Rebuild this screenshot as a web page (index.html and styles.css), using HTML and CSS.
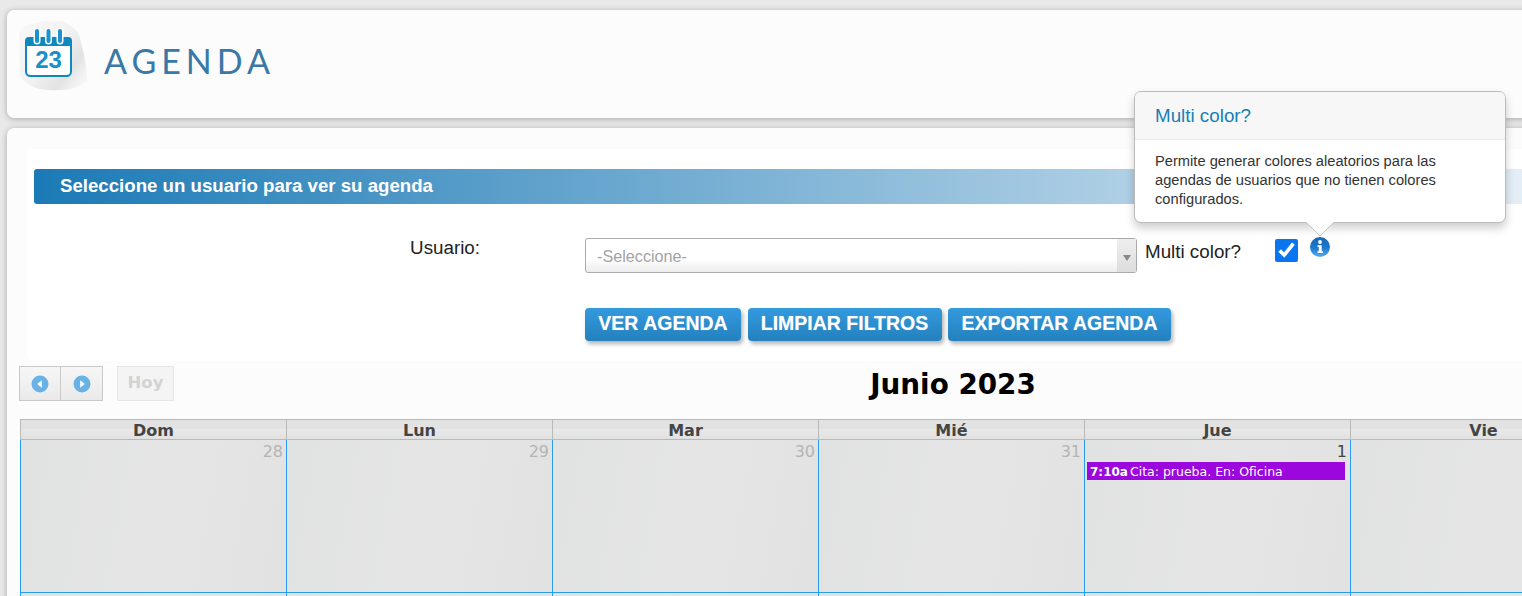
FILE: index.html
```html
<!DOCTYPE html>
<html lang="es">
<head>
<meta charset="utf-8">
<title>Agenda</title>
<link rel="stylesheet" href="styles.css">
</head>
<body>
<div class="page">
  <header class="card head">
    <svg class="logo" width="70" height="74" viewBox="0 0 70 74">
      <defs>
        <linearGradient id="lg" x1="0" y1="0" x2="1" y2=".8"><stop offset="0" stop-color="#f8f8f9"/><stop offset=".55" stop-color="#f1f1f2"/><stop offset=".8" stop-color="#e2e2e3"/><stop offset="1" stop-color="#f6f6f7"/></linearGradient>
      </defs>
      <path d="M0 14Q6 4 18 4Q26 0 34 3Q44 0 50 6Q60 10 62 24Q68 44 68 62Q56 73 30 71Q8 70 1 56Z" fill="url(#lg)"/>
      <rect x="7" y="19" width="45" height="38" rx="4.500" fill="#fff" stroke="#1187c0" stroke-width="2"/>
      <path d="M6 27V22Q6 18 10 18H49Q53 18 53 22V27Z" fill="#1187c0"/>
      <path d="M18 12V22M29.500 12V22M41 12V22" stroke="#fff" stroke-width="7" stroke-linecap="round" fill="none"/>
      <path d="M18 12V22M29.500 12V22M41 12V22" stroke="#1a93cc" stroke-width="4" stroke-linecap="round" fill="none"/>
      <text x="29.500" y="49" text-anchor="middle" class="logo-num">23</text>
    </svg>
    <h1 class="brand">AGENDA</h1>
  </header>

  <main class="card body-card">
    <section class="panel">
      <h2 class="bar">Seleccione un usuario para ver su agenda</h2>
      <div class="form-row">
        <label class="lbl">Usuario:</label>
        <div class="select"><span>-Seleccione-</span><i class="sel-arrow"></i></div>
        <span class="multi">Multi color?</span>
        <input class="chk" type="checkbox" checked>
        <svg class="info" width="20" height="20" viewBox="0 0 20 20">
          <defs><linearGradient id="ig" x1="0" y1="0" x2="0" y2="1"><stop offset="0" stop-color="#1766b6"/><stop offset=".55" stop-color="#1f78cc"/><stop offset="1" stop-color="#52aef0"/></linearGradient></defs>
          <circle cx="10" cy="10" r="10" fill="url(#ig)"/>
          <circle cx="10" cy="5" r="1.900" fill="#fff"/>
          <path d="M7.500 8.200H11.700V14.200H13V16H7.500V14.200H8.800V9.900H7.500Z" fill="#fff"/>
        </svg>
      </div>
      <div class="actions">
        <button class="btn">VER AGENDA</button>
        <button class="btn">LIMPIAR FILTROS</button>
        <button class="btn">EXPORTAR AGENDA</button>
      </div>
    </section>

    <section class="cal">
      <div class="toolbar">
        <div class="nav">
          <span class="nav-btn"><svg width="18" height="18" viewBox="0 0 18 18"><circle cx="9" cy="9" r="8.500" fill="#69b2e6"/><path d="M10.800 5.200V12.800L6.200 9Z" fill="#fff"/></svg></span>
          <span class="nav-btn"><svg width="18" height="18" viewBox="0 0 18 18"><circle cx="9" cy="9" r="8.500" fill="#69b2e6"/><path d="M7.200 5.200V12.800L11.800 9Z" fill="#fff"/></svg></span>
        </div>
        <span class="today">Hoy</span>
        <h2 class="month">Junio 2023</h2>
      </div>
      <div class="grid">
        <div class="dow">Dom</div><div class="dow">Lun</div><div class="dow">Mar</div><div class="dow">Mié</div><div class="dow">Jue</div><div class="dow">Vie</div>
        <div class="day other">28</div>
        <div class="day other">29</div>
        <div class="day other">30</div>
        <div class="day other">31</div>
        <div class="day">1<div class="event"><b>7:10a</b><span class="ev-text">Cita: prueba. En: Oficina</span></div></div>
        <div class="day"></div>
        <div class="day"></div><div class="day"></div><div class="day"></div><div class="day"></div><div class="day"></div><div class="day"></div>
      </div>
    </section>
  </main>

  <aside class="pop">
    <div class="pop-title">Multi color?</div>
    <div class="pop-body">Permite generar colores aleatorios para las agendas de usuarios que no tienen colores configurados.</div>
    <svg class="pop-arrow" width="28" height="15" viewBox="0 0 28 15"><path d="M0 0L14 14L28 0" fill="#fff" stroke="#c6c6c6"/></svg>
  </aside>
</div>
</body>
</html>
```
FILE: styles.css
```css
html, body { margin: 0; height: 596px; overflow: hidden; }
body { background: #e9e9e9; font-family: "Liberation Sans", Arial, sans-serif; color: #222; }
.page { position: relative; width: 1522px; height: 596px; overflow: hidden; padding: 10px 0 0 7px; box-sizing: border-box; }
.card { background: #fcfcfd; border-radius: 7px 0 0 7px; box-shadow: 0 1px 6px rgba(0,0,0,.28); width: 1900px; }
.head { height: 108px; display: flex; align-items: flex-start; padding: 9px 0 0 12px; box-sizing: border-box; }
.logo { flex: none; }
.logo-num { font: bold 24px "Liberation Sans", Arial, sans-serif; fill: #1a8fc8; }
.brand { margin: 25px 0 0 15px; font: 400 34px/1 Lato, "Open Sans", sans-serif; letter-spacing: 5px; color: #3a78a6; }
.body-card { margin-top: 10px; height: 600px; padding: 21px 0 0 20px; box-sizing: border-box; border-radius: 7px 0 0 0; }
.panel { background: #fff; border-radius: 6px 0 0 6px; height: 212px; padding: 20px 0 0 7px; box-sizing: border-box; }
.bar { margin: 0; height: 35px; padding-left: 26px; width: 1488px; box-sizing: border-box; border-radius: 3px 0 0 3px; font: bold 18.650px/34px "Liberation Sans", Arial, sans-serif; color: #fff; background: linear-gradient(90deg, #1b7ab6 0%, #e4eef6 100%); }
.form-row { display: flex; align-items: flex-start; margin-top: 34px; height: 35px; }
.lbl { width: 446px; text-align: right; font-size: 18.800px; line-height: 20px; margin-top: 0; color: #222; flex: none; }
.select { margin-left: 105px; width: 552px; height: 35px; flex: none; box-sizing: border-box; border: 1px solid #aaa; border-radius: 3px; background: linear-gradient(#fff 60%, #ececec); display: flex; align-items: center; justify-content: space-between; padding-left: 11px; font-size: 16.200px; color: #a3a3a3; }
.select span { margin-top: 2px; }
.sel-arrow { width: 19px; height: 33px; background: linear-gradient(#eee, #ddd); position: relative; display: block; }
.sel-arrow::after { content: ""; position: absolute; left: 6px; top: 16px; border: 4px solid transparent; border-top: 6px solid #888; border-bottom: 0; }
.multi { margin-left: 8px; width: 130px; flex: none; font-size: 18.800px; line-height: 20px; margin-top: 4px; color: #222; }
.chk { margin: 1px 0 0 0; width: 23px; height: 23px; flex: none; accent-color: #0a75f0; }
.info { margin: -1px 0 0 12px; flex: none; }
.actions { display: flex; gap: 6.500px; margin-top: 35px; margin-left: 551px; }
.btn { height: 33px; padding: 0 0 2px; border: 0; border-radius: 4px; font: bold 19.500px/31px "Liberation Sans", Arial, sans-serif; color: #fff; background: linear-gradient(#339ade, #2480bd); box-shadow: 2px 3px 4px rgba(0,0,0,.3); text-shadow: 0 0 1px rgba(255,255,255,.4); }
.btn:nth-child(1) { width: 156px; }
.btn:nth-child(2) { width: 194px; }
.btn:nth-child(3) { width: 223px; }
.cal { margin-left: -8px; width: 1875px; }
.toolbar { position: relative; display: flex; align-items: flex-start; height: 53px; padding-top: 5px; margin-bottom: 0; }
.nav { display: flex; }
.nav-btn { width: 42px; height: 35px; box-sizing: border-box; border: 1px solid #c9c9c9; background: linear-gradient(#f6f6f6, #eaeaea); display: flex; align-items: center; justify-content: center; }
.nav-btn + .nav-btn { border-left: 0; }
.today { margin-left: 14px; width: 57px; height: 35px; box-sizing: border-box; border: 1px solid #e6e6e6; background: #f4f4f4; color: #d3d3d3; font: bold 16.500px/31px "DejaVu Sans", sans-serif; text-align: center; }
.month { position: absolute; left: 3px; width: 1862px; top: 7px; margin: 0; text-align: center; font: bold 27.800px/34px "DejaVu Sans", sans-serif; color: #000; }
.grid { margin-left: 1px; display: grid; grid-template-columns: repeat(6, 266px); grid-template-rows: 21px 153px 10px; width: 1596px; }
.dow { box-sizing: border-box; border: 1px solid #b9b9b9; border-right-width: 0; background: linear-gradient(#e2e2e2 50%, #e8e8e8 50%, #e1e1e1); text-align: center; font: bold 16px/21px "DejaVu Sans", sans-serif; color: #444; }
.day { box-sizing: border-box; border-left: 1px solid #2a9bee; border-bottom: 1px solid #2a9bee; background: linear-gradient(100deg, #e1e2e2, #e5e5e5 55%, #e2e2e2); padding: 2px 3px 0 2px; text-align: right; font: 16px/19px "DejaVu Sans", sans-serif; color: #444; }
.other { color: #b4b4b4; }
.event { margin: 1px 2px 0 0; height: 18px; background: #9b07dc; color: #fff; text-align: left; font: 12px/19px "DejaVu Sans", sans-serif; padding-left: 3px; white-space: nowrap; overflow: hidden; }
.ev-text { margin-left: 2px; font-size: 12.500px; }
.pop { position: absolute; left: 1134px; top: 91px; width: 372px; height: 132px; box-sizing: border-box; background: #fff; border: 1px solid #bbb; border-radius: 7px; box-shadow: 0 5px 10px rgba(0,0,0,.2); }
.pop-title { height: 48px; box-sizing: border-box; padding-left: 20px; background: #f7f7f7; border-bottom: 1px solid #ebebeb; border-radius: 6px 6px 0 0; font-size: 18.800px; line-height: 48px; color: #167fb5; }
.pop-body { padding: 12px 20px 0; font-size: 14.700px; line-height: 19px; color: #333; }
.pop-arrow { position: absolute; left: 171px; top: 100%; display: block; }
```
